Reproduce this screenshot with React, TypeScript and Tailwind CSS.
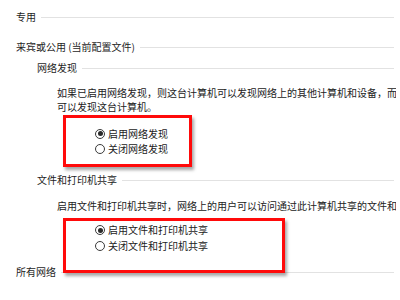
const FONT = "font-['Microsoft_YaHei','Noto_Sans_CJK_SC',sans-serif]";

function Heading({ text, className = '' }: { text: string; className?: string }) {
  return (
    <div className={`flex items-center gap-[5px] pr-[2px] h-[14px] ${className}`}>
      <span className="whitespace-nowrap text-[#1e1e1e]">{text}</span>
      <div className="flex-1 h-px bg-[#e2e2e2]" />
    </div>
  );
}

function Radio({ label, checked, rowClass }: { label: string; checked?: boolean; rowClass: string }) {
  return (
    <div className={`flex items-center gap-[3px] ml-[79px] ${rowClass}`}>
      <span className="flex items-center justify-center w-[10px] h-[10px] rounded-full border border-[#3a3a3a] bg-white shrink-0">
        {checked && <span className="w-[5px] h-[5px] rounded-full bg-[#2a2a2a]" />}
      </span>
      <span className="whitespace-nowrap text-[#222]">{label}</span>
    </div>
  );
}

export default function App() {
  return (
    <div className={`relative w-[400px] h-[300px] overflow-hidden bg-white text-[10px] leading-[14px] ${FONT}`}>
      {/* scroll viewport is clipped a few px short of the right edge */}
      <div className="w-[396px] overflow-hidden flex flex-col pt-[10px] pl-[16px]">
        <Heading text="专用" />
        <Heading text="来宾或公用 (当前配置文件)" className="mt-[16px]" />
        <Heading text="网络发现" className="mt-[7px] ml-[21px]" />
        <div className="mt-[11px] ml-[41px] text-[#222] whitespace-nowrap">
          <div>如果已启用网络发现，则这台计算机可以发现网络上的其他计算机和设备，而其他网络计算机也</div>
          <div>可以发现这台计算机。</div>
        </div>
        <div className="mt-[12px] flex flex-col">
          <Radio label="启用网络发现" checked rowClass="h-[15px]" />
          <Radio label="关闭网络发现" rowClass="h-[15px]" />
        </div>
        <Heading text="文件和打印机共享" className="mt-[17px] ml-[21px]" />
        <div className="mt-[12px] ml-[41px] text-[#222] whitespace-nowrap">
          启用文件和打印机共享时，网络上的用户可以访问通过此计算机共享的文件和打印机。
        </div>
        <div className="mt-[9px] flex flex-col">
          <Radio label="启用文件和打印机共享" checked rowClass="h-[16px]" />
          <Radio label="关闭文件和打印机共享" rowClass="h-[16px]" />
        </div>
        <Heading text="所有网络" className="mt-[11px]" />
      </div>

      {/* red annotation boxes */}
      <div className="absolute left-[63px] top-[115px] w-[129px] h-[52px] border-[3px] border-[#ff0a0a] shadow-[2px_3px_3px_rgba(0,0,0,0.35)]" />
      <div className="absolute left-[63px] top-[218px] w-[222px] h-[55px] border-[3px] border-[#ff0a0a] shadow-[2px_3px_3px_rgba(0,0,0,0.35)]" />
    </div>
  );
}
